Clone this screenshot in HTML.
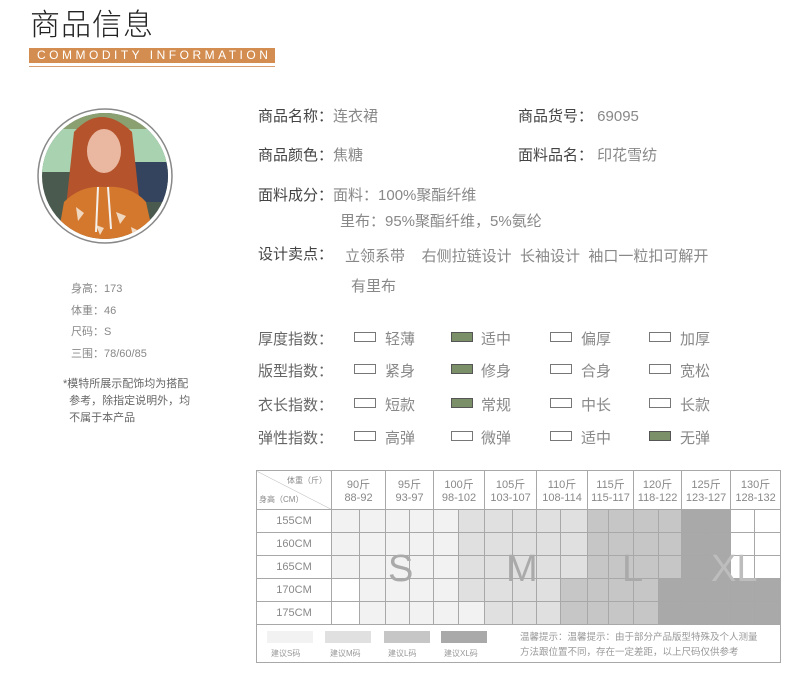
<!DOCTYPE html>
<html><head><meta charset="utf-8"><style>
*{margin:0;padding:0;box-sizing:border-box}
body{width:790px;height:696px;background:#fff;position:relative;overflow:hidden;font-family:"Liberation Sans","Noto Sans CJK SC",sans-serif;color:#666}
.a{position:absolute;white-space:nowrap}
.lb{color:#444;font-size:15px}
.v{color:#888;font-size:15px}
.box{position:absolute;width:22px;height:10px;border:1px solid #777;background:#fff}
.box.on{background:#7b9069;border-color:#555}
.opt{position:absolute;font-size:15px;color:#888}
table{position:absolute;left:256px;top:470px;border-collapse:collapse;table-layout:fixed;width:524px}
td{border:1px solid #a8a8a8;padding:0;font-size:11px;color:#888;text-align:center}
.S{background:#f2f2f2}.M{background:#e0e0e0}.L{background:#c6c6c6}.X{background:#a9a9a9}
.big{position:absolute;font-size:38px;color:#aaa;font-weight:300}
</style></head><body>
<div class="a" style="left:30px;top:9px;font-size:30px;line-height:34px;color:#222;letter-spacing:1px;font-weight:300">商品信息</div>
<div class="a" style="left:29px;top:48px;width:246px;height:15px;background:#d38d50;color:#fff;font-size:12px;letter-spacing:3.5px;line-height:15px;padding-left:8px">COMMODITY INFORMATION</div>
<div class="a" style="left:29px;top:66px;width:246px;height:1px;background:#d8a070"></div>

<svg class="a" style="left:36px;top:107px" width="138" height="138" viewBox="0 0 138 138">
<defs><clipPath id="c"><circle cx="69" cy="69" r="63"/></clipPath></defs>
<circle cx="69" cy="69" r="67" fill="#fff" stroke="#888" stroke-width="1.5"/>
<g clip-path="url(#c)">
<rect width="138" height="138" fill="#4a5a4e"/>
<rect x="0" y="20" width="138" height="45" fill="#a8d2b0"/>
<rect x="95" y="55" width="43" height="40" fill="#34445e"/>
<rect x="0" y="0" width="138" height="22" fill="#8aa070"/>
<path d="M38 25 Q65 -5 96 25 L104 100 L30 100 Z" fill="#b4532c"/>
<ellipse cx="68" cy="44" rx="17" ry="22" fill="#eab8a0"/>
<path d="M20 140 L28 95 Q45 78 68 80 Q95 78 110 95 L120 140 Z" fill="#d4782e"/>
<path d="M40 100 l8 6 l-6 8z M80 105 l10 4 l-6 8z M60 118 l8 3 l-4 7z M95 120 l8 4 l-6 6z M35 125 l8 3 l-6 6z" fill="#f0d8c0"/>
<path d="M62 80 L60 125 M72 80 L75 122" stroke="#f4f0ec" stroke-width="2"/>
</g>
</svg>

<div class="a" style="left:71px;top:279px;font-size:11px;color:#888;line-height:21.5px">身高：173<br>体重：46<br>尺码：S<br>三围：78/60/85</div>
<div class="a" style="left:63px;top:376px;font-size:11px;color:#666;line-height:17px">*模特所展示配饰均为搭配<br>&nbsp;&nbsp;参考，除指定说明外，均<br>&nbsp;&nbsp;不属于本产品</div>

<div class="a lb" style="left:258px;top:105px">商品名称：<span class="v">连衣裙</span></div>
<div class="a lb" style="left:518px;top:105px">商品货号：<span class="v">&nbsp;69095</span></div>
<div class="a lb" style="left:258px;top:144px">商品颜色：<span class="v">焦糖</span></div>
<div class="a lb" style="left:518px;top:144px">面料品名：<span class="v">&nbsp;印花雪纺</span></div>
<div class="a lb" style="left:258px;top:184px">面料成分：<span class="v">面料：100%聚酯纤维</span></div>
<div class="a v" style="left:340px;top:210px">里布：95%聚酯纤维，5%氨纶</div>
<div class="a lb" style="left:258px;top:243px">设计卖点：</div>
<div class="a v" style="left:345px;top:245px">立领系带&nbsp;&nbsp;&nbsp;&nbsp;右侧拉链设计&nbsp;&nbsp;长袖设计&nbsp;&nbsp;袖口一粒扣可解开</div>
<div class="a v" style="left:351px;top:275px">有里布</div>

<div class="a lb" style="left:258px;top:328px;color:#666">厚度指数：</div>
<div class="a lb" style="left:258px;top:360px;color:#666">版型指数：</div>
<div class="a lb" style="left:258px;top:394px;color:#666">衣长指数：</div>
<div class="a lb" style="left:258px;top:427px;color:#666">弹性指数：</div>

<div class="box" style="left:354px;top:332px"></div><div class="opt" style="left:385px;top:328px">轻薄</div>
<div class="box on" style="left:451px;top:332px"></div><div class="opt" style="left:481px;top:328px">适中</div>
<div class="box" style="left:550px;top:332px"></div><div class="opt" style="left:581px;top:328px">偏厚</div>
<div class="box" style="left:649px;top:332px"></div><div class="opt" style="left:680px;top:328px">加厚</div>

<div class="box" style="left:354px;top:364px"></div><div class="opt" style="left:385px;top:360px">紧身</div>
<div class="box on" style="left:451px;top:364px"></div><div class="opt" style="left:481px;top:360px">修身</div>
<div class="box" style="left:550px;top:364px"></div><div class="opt" style="left:581px;top:360px">合身</div>
<div class="box" style="left:649px;top:364px"></div><div class="opt" style="left:680px;top:360px">宽松</div>

<div class="box" style="left:354px;top:398px"></div><div class="opt" style="left:385px;top:394px">短款</div>
<div class="box on" style="left:451px;top:398px"></div><div class="opt" style="left:481px;top:394px">常规</div>
<div class="box" style="left:550px;top:398px"></div><div class="opt" style="left:581px;top:394px">中长</div>
<div class="box" style="left:649px;top:398px"></div><div class="opt" style="left:680px;top:394px">长款</div>

<div class="box" style="left:354px;top:431px"></div><div class="opt" style="left:385px;top:427px">高弹</div>
<div class="box" style="left:451px;top:431px"></div><div class="opt" style="left:481px;top:427px">微弹</div>
<div class="box" style="left:550px;top:431px"></div><div class="opt" style="left:581px;top:427px">适中</div>
<div class="box on" style="left:649px;top:431px"></div><div class="opt" style="left:680px;top:427px">无弹</div>

<table>
<colgroup><col style="width:75px"><col style="width:28px"><col style="width:26px"><col style="width:24px"><col style="width:24px"><col style="width:25px"><col style="width:26px"><col style="width:28px"><col style="width:24px"><col style="width:24px"><col style="width:27px"><col style="width:21px"><col style="width:25px"><col style="width:25px"><col style="width:23px"><col style="width:24px"><col style="width:25px"><col style="width:24px"><col style="width:26px"></colgroup>
<tr style="height:39px">
<td style="position:relative;background:linear-gradient(to top right,#fff calc(50% - 0.5px),#bbb 50%,#fff calc(50% + 0.5px))"><span style="position:absolute;right:4px;top:4px;font-size:8px">体重（斤）</span><span style="position:absolute;left:2px;bottom:4px;font-size:8px">身高（CM）</span></td>
<td colspan="2">90斤<br>88-92</td><td colspan="2">95斤<br>93-97</td><td colspan="2">100斤<br>98-102</td><td colspan="2">105斤<br>103-107</td><td colspan="2">110斤<br>108-114</td><td colspan="2">115斤<br>115-117</td><td colspan="2">120斤<br>118-122</td><td colspan="2">125斤<br>123-127</td><td colspan="2">130斤<br>128-132</td></tr>
<tr style="height:23px"><td>155CM</td><td class="S"></td><td class="S"></td><td class="S"></td><td class="S"></td><td class="S"></td><td class="M"></td><td class="M"></td><td class="M"></td><td class="M"></td><td class="M"></td><td class="L"></td><td class="L"></td><td class="L"></td><td class="L"></td><td class="X"></td><td class="X"></td><td></td><td></td></tr>
<tr style="height:23px"><td>160CM</td><td class="S"></td><td class="S"></td><td class="S"></td><td class="S"></td><td class="S"></td><td class="M"></td><td class="M"></td><td class="M"></td><td class="M"></td><td class="M"></td><td class="L"></td><td class="L"></td><td class="L"></td><td class="L"></td><td class="X"></td><td class="X"></td><td></td><td></td></tr>
<tr style="height:23px"><td>165CM</td><td class="S"></td><td class="S"></td><td class="S"></td><td class="S"></td><td class="S"></td><td class="M"></td><td class="M"></td><td class="M"></td><td class="M"></td><td class="M"></td><td class="L"></td><td class="L"></td><td class="L"></td><td class="L"></td><td class="X"></td><td class="X"></td><td></td><td></td></tr>
<tr style="height:23px"><td>170CM</td><td></td><td class="S"></td><td class="S"></td><td class="S"></td><td class="S"></td><td class="M"></td><td class="M"></td><td class="M"></td><td class="M"></td><td class="L"></td><td class="L"></td><td class="L"></td><td class="L"></td><td class="X"></td><td class="X"></td><td class="X"></td><td class="X"></td><td class="X"></td></tr>
<tr style="height:23px"><td>175CM</td><td></td><td class="S"></td><td class="S"></td><td class="S"></td><td class="S"></td><td class="S"></td><td class="M"></td><td class="M"></td><td class="M"></td><td class="L"></td><td class="L"></td><td class="L"></td><td class="L"></td><td class="X"></td><td class="X"></td><td class="X"></td><td class="X"></td><td class="X"></td></tr>
<tr style="height:38px"><td colspan="19" style="border-top:1px solid #a8a8a8"></td></tr>
</table>
<div class="big" style="left:388px;top:548px">S</div>
<div class="big" style="left:506px;top:548px">M</div>
<div class="big" style="left:622px;top:548px">L</div>
<div class="big" style="left:711px;top:548px;color:#bdbdbd">XL</div>

<div class="a" style="left:267px;top:631px;width:46px;height:12px;background:#f2f2f2"></div>
<div class="a" style="left:325px;top:631px;width:46px;height:12px;background:#e0e0e0"></div>
<div class="a" style="left:384px;top:631px;width:46px;height:12px;background:#c6c6c6"></div>
<div class="a" style="left:441px;top:631px;width:46px;height:12px;background:#a9a9a9"></div>
<div class="a" style="left:271px;top:648px;font-size:8px;color:#999">建议S码</div>
<div class="a" style="left:330px;top:648px;font-size:8px;color:#999">建议M码</div>
<div class="a" style="left:388px;top:648px;font-size:8px;color:#999">建议L码</div>
<div class="a" style="left:444px;top:648px;font-size:8px;color:#999">建议XL码</div>
<div class="a" style="left:520px;top:630px;font-size:9.5px;color:#999;line-height:15px">温馨提示：温馨提示：由于部分产品版型特殊及个人测量<br>方法跟位置不同，存在一定差距，以上尺码仅供参考</div>
</body></html>
